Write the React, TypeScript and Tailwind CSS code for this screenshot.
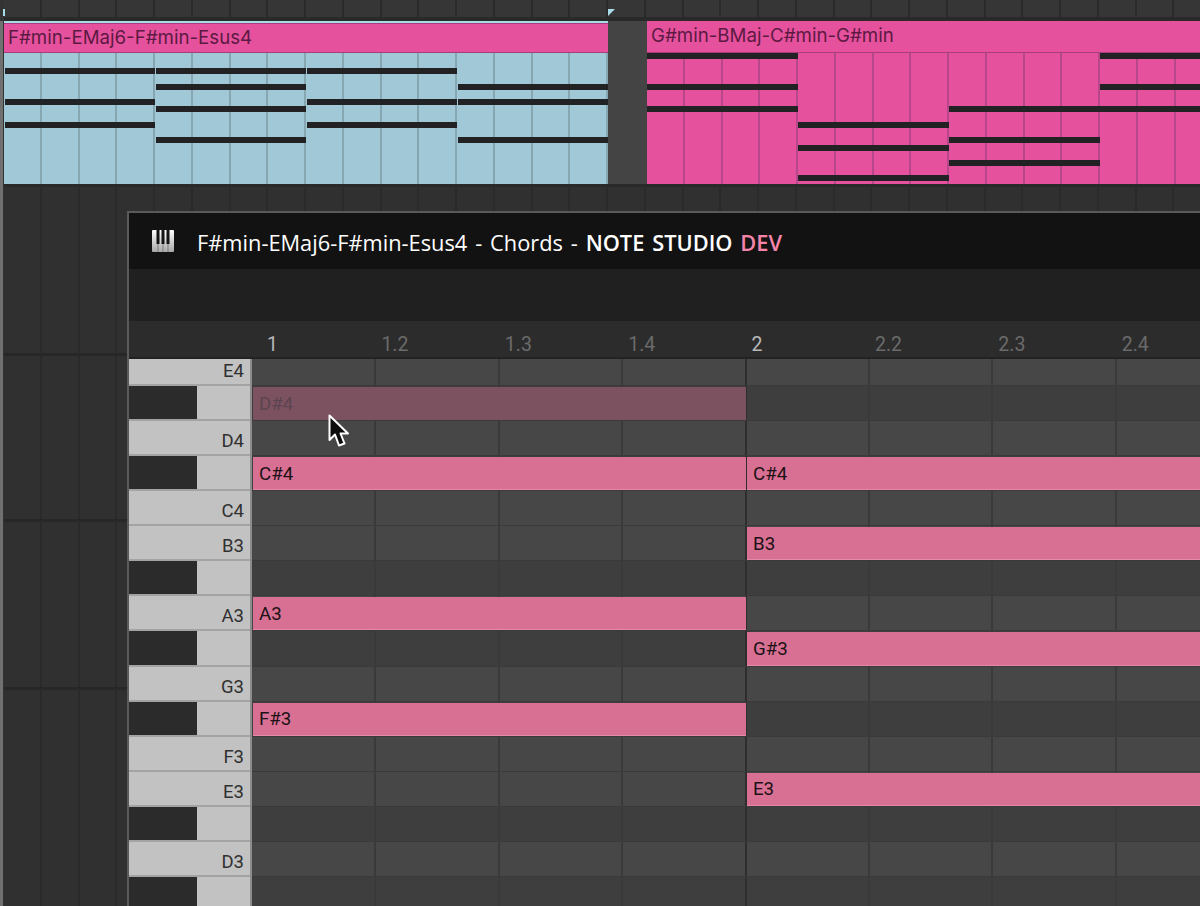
const beats = Array.from({ length: 32 }, (_, i) => i);
const rollCols = Array.from({ length: 8 }, (_, i) => i);

// y of every bar inside a clip body, one list per chord
const blueChords = [[15, 46, 69], [15, 31, 53, 84], [15, 46, 69], [31, 46, 84]];
const pinkChords = [[0, 31, 53], [69, 92, 122], [53, 84, 107], [0, 31, 53]];

const rows = [
  { key: 'E4', black: false, h: 'h-[27px]' },
  { key: 'D#4', black: true, h: 'h-[35.07px]', ghost: true, notes: [0] },
  { key: 'D4', black: false, h: 'h-[35.07px]' },
  { key: 'C#4', black: true, h: 'h-[35.07px]', notes: [0, 1] },
  { key: 'C4', black: false, h: 'h-[35.07px]' },
  { key: 'B3', black: false, h: 'h-[35.07px]', notes: [1] },
  { key: 'A#3', black: true, h: 'h-[35.07px]' },
  { key: 'A3', black: false, h: 'h-[35.07px]', notes: [0] },
  { key: 'G#3', black: true, h: 'h-[35.07px]', notes: [1] },
  { key: 'G3', black: false, h: 'h-[35.07px]' },
  { key: 'F#3', black: true, h: 'h-[35.07px]', notes: [0] },
  { key: 'F3', black: false, h: 'h-[35.07px]' },
  { key: 'E3', black: false, h: 'h-[35.07px]', notes: [1] },
  { key: 'D#3', black: true, h: 'h-[35.07px]' },
  { key: 'D3', black: false, h: 'h-[35.07px]' },
  { key: 'C#3', black: true, h: 'h-[35.07px]' },
];

function ArrangeCells({ className }: { className: string }) {
  return <div className={`flex ${className}`}>
      {beats.map(b => <div key={b} className="h-full w-[37.75px] shrink-0 border-r-2 border-[#2a2a2a]"></div>)}
    </div>;
}

function Clip({ title, chords, blue }: { title: string; chords: number[][]; blue?: boolean }) {
  return <div className="flex h-full w-[604px] shrink-0 flex-col">
      {blue && <div className="h-[2px] bg-[#a8dce8]"></div>}
      <div className={`flex flex-1 items-center border-b border-[#a83d7b] bg-[#e6519d] pl-[4px] font-['Inter',sans-serif] text-[18.7px] text-[#5c1a42] ${blue ? 'border-t' : ''}`}>
        {title}
      </div>
      <div className={`flex h-[131px] shrink-0 ${blue ? 'bg-[#a1c8d6]' : 'bg-[#e6519d]'}`}>
        {chords.map((bars, i) => <div key={i} className="relative flex w-[151px] shrink-0">
            {[0, 1, 2, 3].map(c => <div key={c} className={`h-full flex-1 border-r-2 ${blue ? 'border-[#86a7b2]' : 'border-[#b5478a]'}`}></div>)}
            {bars.map(y => <div key={y} className={`absolute right-0 h-[6px] bg-[#222225] ${blue ? 'left-[1px]' : 'left-0'}`} style={{ top: y }}></div>)}
          </div>)}
      </div>
    </div>;
}

function PianoIcon() {
  return <svg width="22" height="22" viewBox="0 0 22 22" className="shrink-0">
      <defs>
        <linearGradient id="keys" x1="0" y1="0" x2="0" y2="1">
          <stop offset="0" stopColor="#ffffff" />
          <stop offset="1" stopColor="#a8a8a8" />
        </linearGradient>
      </defs>
      <rect x="0" y="0" width="22" height="22" rx="1" fill="url(#keys)" />
      <path d="M4.5 0h3v14h-3zM9.5 0h3v14h-3zM14.5 0h3v14h-3z" fill="#141414" />
      <path d="M6 14v8M11 14v8M16 14v8" stroke="#7d7d7d" strokeWidth="1" />
    </svg>;
}

function Cursor() {
  return <svg width="22" height="35" viewBox="0 0 22 35" className="absolute left-[199px] top-[55px]">
      <path d="M1.5 1.5V26L7 20.5L11 31.5L16.5 29.5L12.5 19.5H20Z" fill="#0c0c0c" stroke="#ffffff" strokeWidth="2" strokeLinejoin="round" />
    </svg>;
}

function RollRow({ row }: { row: (typeof rows)[number] }) {
  const light = row.black ? 'bg-[#3e3e3e]' : 'bg-[#474747]';
  return <div className={`flex shrink-0 ${row.h}`}>
      <div className="relative flex w-[121px] shrink-0 items-end justify-end border-b-2 border-[#a3a3a3] bg-[#c2c2c2] pr-[6px] font-['Roboto',sans-serif] text-[18.5px] leading-[26px] text-[#303030]">
        {row.black ? <div className="absolute bottom-0 left-0 top-0 w-[68px] bg-[#2b2b2b]"></div> : row.key}
      </div>
      <div className="w-[2px] shrink-0 bg-[#8c8c8c]"></div>
      <div className={`relative flex flex-1 border-b border-[#3a3a3a] pl-[1px] ${light}`}>
        {rollCols.map(c => <div key={c} className={`h-full w-[123.4px] shrink-0 border-r-2 ${c === 3 ? 'border-[#2e2e2e]' : 'border-[#3a3a3a]'}`}></div>)}
        {(row.notes ?? []).map(n => <div key={n} className={`absolute bottom-0 top-[1px] flex w-[493px] items-center border-b pl-[6px] pt-[1px] font-['Roboto',sans-serif] text-[18.7px] ${row.ghost ? 'border-[#7c5260] bg-[#7c5260] text-[#5c4450]' : 'border-[#e48aa8] bg-[#d87093] text-[#1c1216]'} ${n === 0 ? 'left-[1px]' : 'left-[495px] w-[500px]'}`}>
            {row.key}
          </div>)}
      </div>
    </div>;
}

function NoteWindow() {
  const ticks = ['1', '1.2', '1.3', '1.4', '2', '2.2', '2.3', '2.4'];
  return <div className="absolute bottom-0 left-[127px] right-0 top-[211px] flex flex-col border-l-2 border-t-2 border-[#5a5a5a] bg-[#202020]">
      <div className="flex h-[56px] shrink-0 items-center gap-[23px] bg-[#121212] pl-[23px] pt-[4px] font-['Open_Sans',sans-serif] text-[21.8px] text-white">
        <div className="-mt-[4px]"><PianoIcon /></div>
        <div className="whitespace-nowrap [word-spacing:2.2px]">
          F#min-EMaj6-F#min-Esus4 - Chords - <span className="font-semibold">NOTE STUDIO</span> <span className="font-semibold text-[#f585a8]">DEV</span>
        </div>
      </div>
      <div className="h-[52px] shrink-0 bg-[#202020]"></div>
      <div className="flex h-[38px] shrink-0 items-center border-b-2 border-[#222222] bg-[#2c2c2c] pl-[123px] pt-[12px] font-['Roboto',sans-serif] text-[19.5px] leading-[24px]">
        {ticks.map((t, i) => <div key={t} className={`w-[123.4px] shrink-0 ${i === 0 ? 'pl-[15px] text-[#b8b8b8]' : i === 4 ? 'pl-[6px] text-[#b8b8b8]' : 'pl-[6px] text-[#6a6a6a]'}`}>
            {t}
          </div>)}
      </div>
      <div className="relative flex-1 overflow-hidden">
        {rows.map(r => <RollRow key={r.key} row={r} />)}
        <Cursor />
      </div>
    </div>;
}

export default function App() {
  return <div className="relative flex h-[906px] w-[1200px] overflow-hidden bg-[#303030]">
      <div className="flex w-[4px] shrink-0 flex-col">
        <div className="h-[21px] bg-[#333333]"></div>
        <div className="flex-1 border-r border-[#333333] bg-[#707070]"></div>
      </div>
      <div className="flex min-w-0 flex-1 flex-col">
        <ArrangeCells className="h-[17px] shrink-0 bg-[#363636]" />
        <div className="h-[4px] shrink-0 bg-[#292929]"></div>
        <div className="flex h-[163px] shrink-0 bg-[#444444]">
          <Clip blue title="F#min-EMaj6-F#min-Esus4" chords={blueChords} />
          <div className="w-[39px] shrink-0"></div>
          <Clip title="G#min-BMaj-C#min-G#min" chords={pinkChords} />
        </div>
        <div className="h-[3px] shrink-0 bg-[#292929]"></div>
        <ArrangeCells className="h-[169px] shrink-0 border-b-[3px] border-[#272727]" />
        <ArrangeCells className="h-[166px] shrink-0 border-b-[3px] border-[#272727]" />
        <ArrangeCells className="h-[168px] shrink-0 border-b-[3px] border-[#272727]" />
        <ArrangeCells className="h-[216px] shrink-0" />
      </div>
      <div className="absolute left-[608px] top-[9px] h-[7px] w-[7px] bg-[#a8dce8] [clip-path:polygon(0_0,100%_0,0_100%)]"></div>
      <div className="absolute left-[3px] top-[9px] h-[7px] w-[2px] bg-[#a8dce8]"></div>
      <NoteWindow />
    </div>;
}
